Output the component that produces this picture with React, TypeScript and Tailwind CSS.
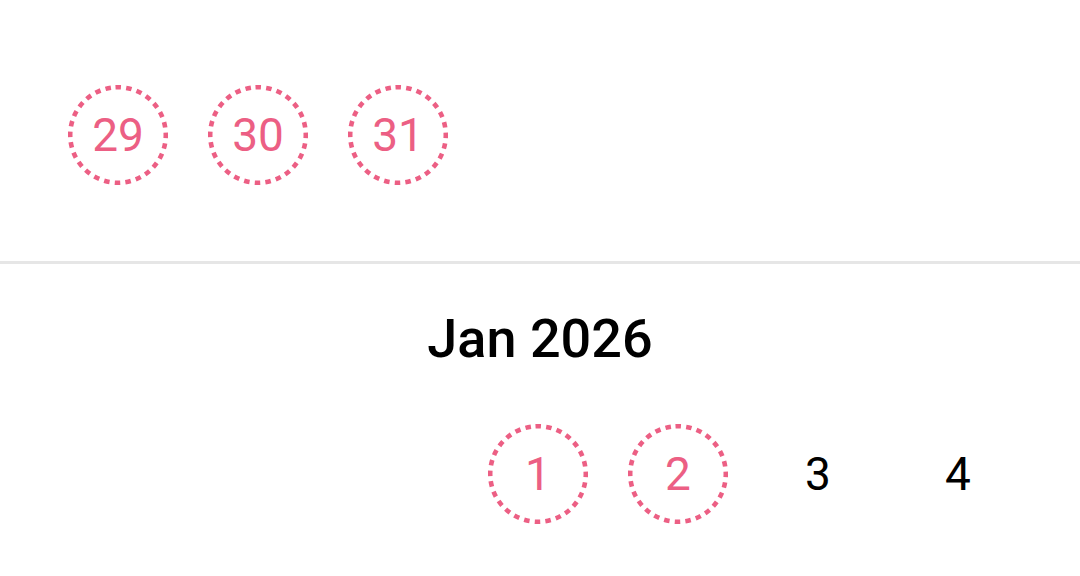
const PINK = "#ec5f84";

type Day = { n: number | null; marked?: boolean };

function DayCell({ day }: { day: Day }) {
  if (day.n === null) return <div className="h-[100px]" />;
  return (
    <div className="flex justify-center">
      <div className="relative flex h-[100px] w-[100px] items-center justify-center">
        {day.marked && (
          <svg className="absolute inset-0" width="100" height="100" viewBox="0 0 100 100">
            <circle
              cx="50"
              cy="50"
              r="47.8"
              fill="none"
              stroke={PINK}
              strokeWidth="4.6"
              strokeDasharray="5.5 5.23"
              transform="rotate(-93 50 50)"
            />
          </svg>
        )}
        <span
          className={`relative text-[46px] leading-none ${day.marked ? "text-[#ec5f84]" : "text-black"}`}
        >
          {day.n}
        </span>
      </div>
    </div>
  );
}

function Week({ days }: { days: Day[] }) {
  return (
    <div className="grid grid-cols-[repeat(7,140px)] pl-[48px]">
      {days.map((d, i) => (
        <DayCell key={i} day={d} />
      ))}
    </div>
  );
}

export default function App() {
  const dec: Day[] = [
    { n: 29, marked: true },
    { n: 30, marked: true },
    { n: 31, marked: true },
    { n: null },
    { n: null },
    { n: null },
    { n: null },
  ];
  const jan: Day[] = [
    { n: null },
    { n: null },
    { n: null },
    { n: 1, marked: true },
    { n: 2, marked: true },
    { n: 3 },
    { n: 4 },
  ];

  return (
    <div className="h-[576px] w-[1080px] overflow-hidden bg-white font-['Roboto',sans-serif]">
      <div className="pt-[85px]">
        <Week days={dec} />
      </div>
      <div className="mt-[76px] h-[3px] bg-[#e6e6e6]" />
      <h2 className="mt-[45px] text-center text-[54px] font-medium leading-[60px] text-black">
        Jan 2026
      </h2>
      <div className="mt-[55px]">
        <Week days={jan} />
      </div>
    </div>
  );
}
